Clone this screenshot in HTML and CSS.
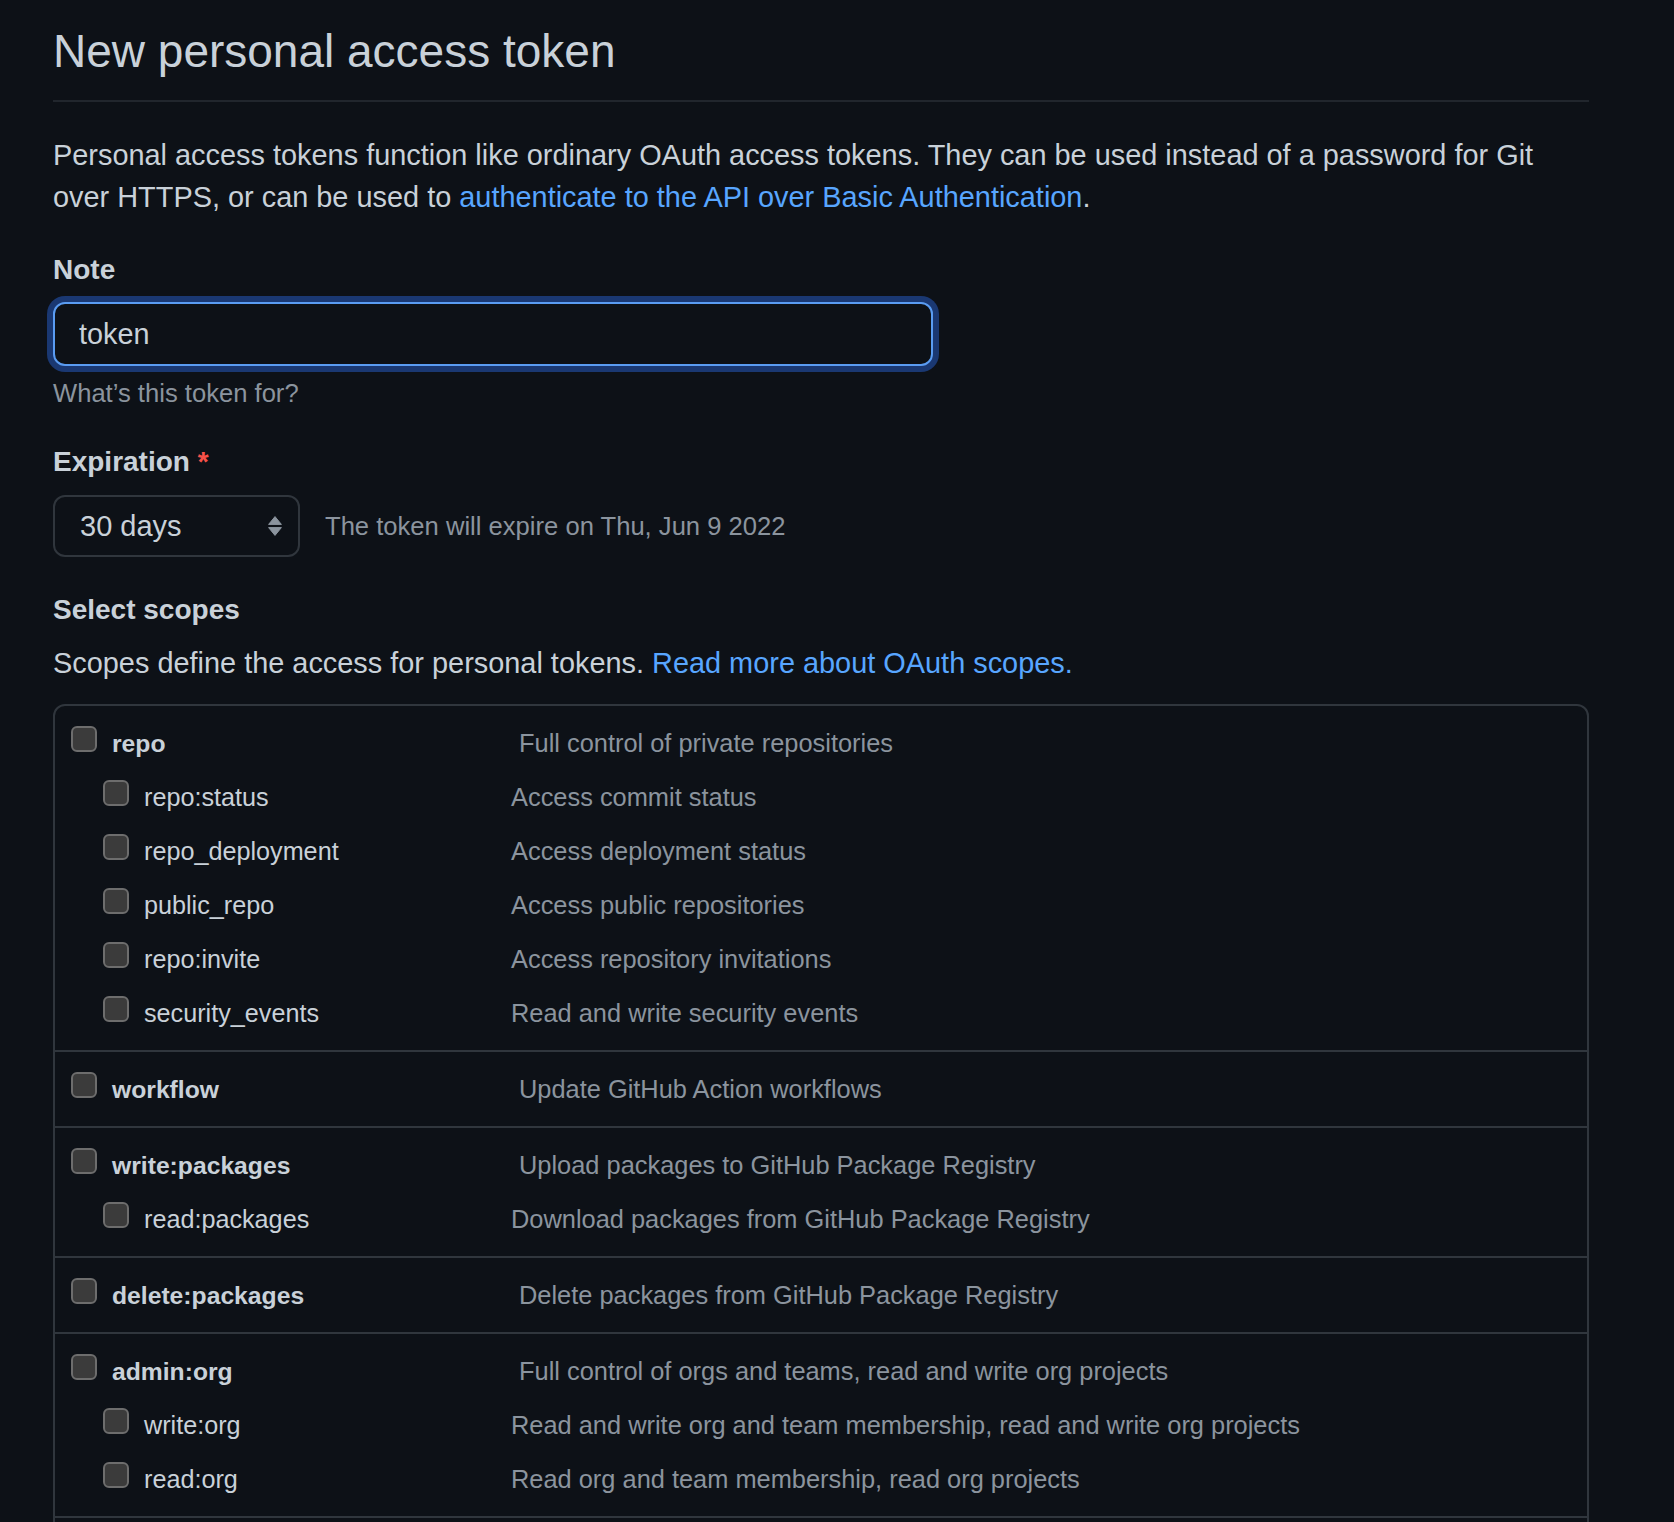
FILE: index.html
```html
<!DOCTYPE html>
<html lang="en">
<head>
<meta charset="utf-8">
<title>New personal access token</title>
<link rel="stylesheet" href="styles.css">
</head>
<body>
<main class="page">
  <div class="content">
    <h1 class="subhead">New personal access token</h1>
    <p class="intro">Personal access tokens function like ordinary OAuth access tokens. They can be used instead of a password for Git over HTTPS, or can be used to <a class="link" href="#">authenticate to the API over Basic Authentication</a>.</p>

    <label class="field-label note-label" for="note">Note</label>
    <input id="note" class="text-input" type="text" value="token">
    <p class="field-note">What’s this token for?</p>

    <label class="field-label exp-label">Expiration <span class="req">*</span></label>
    <div class="exp-row">
      <div class="select">
        <span>30 days</span>
        <svg class="select-arrows" width="14" height="20" viewBox="0 0 14 20" aria-hidden="true">
          <path d="M7 0.6 L13.4 8.4 L0.6 8.4 Z" fill="#8b949e" stroke="#8b949e" stroke-width="1" stroke-linejoin="round"/>
          <path d="M0.6 11.6 L13.4 11.6 L7 19.4 Z" fill="#8b949e" stroke="#8b949e" stroke-width="1" stroke-linejoin="round"/>
        </svg>
      </div>
      <span class="exp-note">The token will expire on Thu, Jun 9 2022</span>
    </div>

    <h3 class="field-label scopes-title">Select scopes</h3>
    <p class="scopes-desc">Scopes define the access for personal tokens. <a class="link" href="#">Read more about OAuth scopes.</a></p>

    <ul class="scopes">
      <li class="group">
        <div class="row top"><label class="lab"><input class="cb" type="checkbox">repo</label><span class="desc">Full control of private repositories</span></div>
        <div class="row sub"><label class="lab"><input class="cb" type="checkbox">repo:status</label><span class="desc">Access commit status</span></div>
        <div class="row sub"><label class="lab"><input class="cb" type="checkbox">repo_deployment</label><span class="desc">Access deployment status</span></div>
        <div class="row sub"><label class="lab"><input class="cb" type="checkbox">public_repo</label><span class="desc">Access public repositories</span></div>
        <div class="row sub"><label class="lab"><input class="cb" type="checkbox">repo:invite</label><span class="desc">Access repository invitations</span></div>
        <div class="row sub"><label class="lab"><input class="cb" type="checkbox">security_events</label><span class="desc">Read and write security events</span></div>
      </li>
      <li class="group">
        <div class="row top"><label class="lab"><input class="cb" type="checkbox">workflow</label><span class="desc">Update GitHub Action workflows</span></div>
      </li>
      <li class="group">
        <div class="row top"><label class="lab"><input class="cb" type="checkbox">write:packages</label><span class="desc">Upload packages to GitHub Package Registry</span></div>
        <div class="row sub"><label class="lab"><input class="cb" type="checkbox">read:packages</label><span class="desc">Download packages from GitHub Package Registry</span></div>
      </li>
      <li class="group">
        <div class="row top"><label class="lab"><input class="cb" type="checkbox">delete:packages</label><span class="desc">Delete packages from GitHub Package Registry</span></div>
      </li>
      <li class="group">
        <div class="row top"><label class="lab"><input class="cb" type="checkbox">admin:org</label><span class="desc">Full control of orgs and teams, read and write org projects</span></div>
        <div class="row sub"><label class="lab"><input class="cb" type="checkbox">write:org</label><span class="desc">Read and write org and team membership, read and write org projects</span></div>
        <div class="row sub"><label class="lab"><input class="cb" type="checkbox">read:org</label><span class="desc">Read org and team membership, read org projects</span></div>
      </li>
      <li class="group">
        <div class="row top"><label class="lab"><input class="cb" type="checkbox">admin:public_key</label><span class="desc">Full control of user public keys</span></div>
        <div class="row sub"><label class="lab"><input class="cb" type="checkbox">write:public_key</label><span class="desc">Write user public keys</span></div>
        <div class="row sub"><label class="lab"><input class="cb" type="checkbox">read:public_key</label><span class="desc">Read user public keys</span></div>
      </li>
    </ul>
  </div>
</main>
</body>
</html>
```

FILE: styles.css
```css
* {
  box-sizing: border-box;
}

html, body {
  margin: 0;
  padding: 0;
  background: #0d1117;
}

body {
  font-family: "Liberation Sans", Arial, sans-serif;
  color: #c9d1d9;
}

.page {
  height: 100vh;
  overflow: hidden;
  padding: 22px 0 0 53px;
}

.content {
  width: 1536px;
  display: flex;
  flex-direction: column;
  align-items: flex-start;
}

.subhead {
  align-self: stretch;
  margin: 0;
  padding: 0 0 20px;
  font-size: 46px;
  line-height: 58px;
  font-weight: 400;
  color: #c9d1d9;
  border-bottom: 2px solid #21262d;
}

.intro {
  margin: 32px 0 0;
  font-size: 28.9px;
  line-height: 42px;
}

.link {
  color: #58a6ff;
  text-decoration: none;
}

.field-label {
  display: block;
  margin: 0;
  font-size: 28px;
  line-height: 42px;
  font-weight: 700;
  color: #c9d1d9;
}

.note-label {
  margin-top: 31px;
}

.text-input {
  margin: 11px 0 0;
  width: 880px;
  height: 64px;
  padding: 0 24px;
  font-family: inherit;
  font-size: 28.8px;
  color: #c9d1d9;
  background: #0d1117;
  border: 2px solid #5a9cf2;
  border-radius: 12px;
  box-shadow: 0 0 0 6px #1a3872;
  outline: none;
}

.field-note {
  margin: 9px 0 0;
  font-size: 25.6px;
  line-height: 36px;
  color: #8b949e;
}

.exp-label {
  margin-top: 30px;
}

.req {
  color: #f85149;
}

.exp-row {
  margin-top: 12px;
  display: flex;
  align-items: center;
  gap: 25px;
}

.select {
  width: 247px;
  height: 62px;
  padding: 0 16px 0 25px;
  display: flex;
  align-items: center;
  justify-content: space-between;
  border: 2px solid #30363d;
  border-radius: 12px;
  font-size: 29px;
  line-height: 40px;
  color: #c9d1d9;
}

.select-arrows {
  display: block;
}

.exp-note {
  font-size: 25.6px;
  line-height: 36px;
  color: #8b949e;
}

.scopes-title {
  margin-top: 32px;
}

.scopes-desc {
  margin: 11px 0 0;
  font-size: 28.9px;
  line-height: 42px;
}

.scopes {
  align-self: stretch;
  list-style: none;
  margin: 20px 0 0;
  padding: 0;
  border: 2px solid #30363d;
  border-radius: 12px 12px 0 0;
}

.group {
  margin: 0 -2px;
  padding: 10px 0 10px 18px;
  border-bottom: 2px solid #30363d;
}

.row {
  display: flex;
  align-items: baseline;
  height: 54px;
  line-height: 54px;
}

.lab {
  flex: none;
  white-space: nowrap;
  color: #c9d1d9;
}

.row.top .lab {
  width: 448px;
  font-size: 24.7px;
  font-weight: 700;
}

.row.top .cb {
  margin-right: 15px;
}

.row.sub {
  padding-left: 32px;
}

.row.sub .lab {
  width: 408px;
  font-size: 25.2px;
}

.cb {
  appearance: none;
  -webkit-appearance: none;
  display: inline-block;
  width: 26px;
  height: 26px;
  margin: 0 15px 0 0;
  border: 2px solid #6d6d6d;
  border-radius: 6px;
  background: #3b3b3b;
  vertical-align: baseline;
}

.desc {
  font-size: 25.4px;
  color: #8b949e;
  white-space: nowrap;
}
```
